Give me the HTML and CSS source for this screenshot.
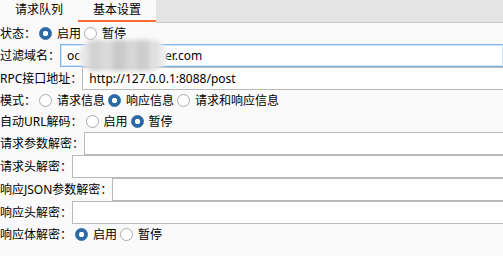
FILE: index.html
```html
<!DOCTYPE html>
<html lang="zh-CN">
<head>
    <meta charset="UTF-8">
    <title>基本设置</title>
    <link rel="stylesheet" href="styles.css">
</head>
<body>
    <div class="tabs">
        <div class="tab">请求队列</div>
        <div class="tab active">基本设置</div>
        <div class="tab-fill"></div>
    </div>

    <div class="form">
        <div class="row">
            <span class="label">状态：</span>
            <span class="radio on"></span><span class="opt">启用</span>
            <span class="radio"></span><span class="opt">暂停</span>
        </div>
        <div class="field">
            <span class="label">过滤域名：</span>
            <div class="input focus masked">oc<span class="gap"></span>er.com</div>
        </div>
        <div class="field">
            <span class="label">RPC接口地址：</span>
            <div class="input">http://127.0.0.1:8088/post</div>
        </div>
        <div class="row">
            <span class="label">模式：</span>
            <span class="radio"></span><span class="opt">请求信息</span>
            <span class="radio on"></span><span class="opt">响应信息</span>
            <span class="radio"></span><span class="opt">请求和响应信息</span>
        </div>
        <div class="row">
            <span class="label">自动URL解码：</span>
            <span class="radio"></span><span class="opt">启用</span>
            <span class="radio on"></span><span class="opt">暂停</span>
        </div>
        <div class="field">
            <span class="label">请求参数解密：</span>
            <div class="input"></div>
        </div>
        <div class="field">
            <span class="label">请求头解密：</span>
            <div class="input"></div>
        </div>
        <div class="field">
            <span class="label">响应JSON参数解密：</span>
            <div class="input"></div>
        </div>
        <div class="field">
            <span class="label">响应头解密：</span>
            <div class="input"></div>
        </div>
        <div class="row">
            <span class="label">响应体解密：</span>
            <span class="radio on"></span><span class="opt">启用</span>
            <span class="radio"></span><span class="opt">暂停</span>
        </div>
    </div>
</body>
</html>
```

FILE: styles.css
```css
:root {
    --page-bg: #fafafa;
    --tab-bar: #e4e4e4;
    --accent: #ff6b35;
    --border: #b9b9b9;
    --radio-on: #2b6aa6;
}

* {
    margin: 0;
    padding: 0;
    box-sizing: border-box;
}

body {
    background: var(--page-bg);
    color: #000;
    font-family: "Noto Sans", "Noto Sans CJK SC", sans-serif;
    font-size: 12px;
    width: 503px;
    height: 256px;
    overflow: hidden;
}

.tabs {
    display: flex;
    align-items: flex-start;
    height: 23px;
}

.tab {
    height: 22px;
    padding: 0 15px;
    line-height: 20px;
    border-bottom: 2px solid transparent;
    background: var(--page-bg);
}

.tab.active {
    border-bottom-color: var(--accent);
}

.tab-fill {
    flex: 1;
    height: 23px;
    background: var(--tab-bar);
    border-bottom: 1px solid #c9c9c9;
}

.row {
    display: flex;
    align-items: center;
    height: 21px;
    white-space: nowrap;
}

.field {
    display: flex;
    align-items: center;
    height: 23px;
    white-space: nowrap;
}

.label {
    line-height: 21px;
}

.radio {
    width: 13px;
    height: 13px;
    margin: 0 5px 0 3px;
    border-radius: 50%;
    border: 1px solid #ababab;
    background: #fff;
    flex: none;
}

.radio.on {
    border-color: var(--radio-on);
    background: radial-gradient(circle, #fff 0 2.4px, var(--radio-on) 3px);
}

.opt {
    line-height: 21px;
}

.input {
    flex: 1;
    height: 23px;
    padding: 0 6px;
    line-height: 21px;
    background: #fff;
    border: 1px solid var(--border);
    border-right: none;
}

.input.focus {
    border-color: #7eb4ea;
    box-shadow: inset 0 0 0 1px #d3e5f8;
}

/* blurred-out part of the domain */
.masked {
    position: relative;
}

.gap {
    display: inline-block;
    width: 85px;
}

.masked::after {
    content: "";
    position: absolute;
    left: 18px;
    top: -5px;
    width: 88px;
    height: 31px;
    border-radius: 15px;
    background: linear-gradient(90deg,
        #e6e6e6 0 10px, #d2d2d2 10px 22px, #dadada 22px 34px,
        #c9c9c9 34px 46px, #d6d6d6 46px 58px, #cdcdcd 58px 70px,
        #dfdfdf 70px 80px, #ececec 80px);
    filter: blur(2px);
}
```
